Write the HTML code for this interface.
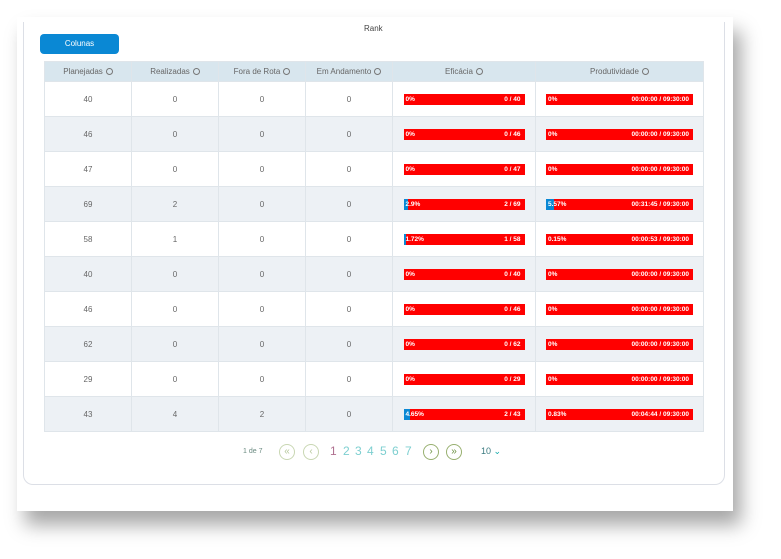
<!DOCTYPE html>
<html><head><meta charset="utf-8"><style>
body{margin:0;width:781px;height:559px;background:#fff;position:relative;overflow:hidden;font-family:"Liberation Sans",sans-serif}
.outer{position:absolute;left:17px;top:17px;width:716px;height:494px;background:#fff;box-shadow:8px 14px 18px rgba(0,0,0,.35)}
.card{position:absolute;left:23px;top:22px;width:700px;height:462px;border:1px solid #dcdfe6;border-top:none;border-radius:0 0 10px 10px;background:#fff}
.rank{position:absolute;left:364px;top:24px;font-size:8px;color:#444}
.btn{position:absolute;left:40px;top:34px;width:79px;height:20px;background:#0a88d4;border-radius:4px;color:#fff;font-size:8px;text-align:center;line-height:20px}
table{position:absolute;left:44px;top:61px;border-collapse:collapse;font-size:8px;color:#666}
td,th{border:1px solid #dfe5ea;text-align:center;padding:0}
th{background:#d8e6ee;height:19px;font-weight:normal;color:#666}
td{height:34px}
tr.z td{background:#edf1f5}
.i{display:inline-block;width:5px;height:5px;border:1px solid #777;border-radius:50%;margin-left:3px;vertical-align:-1px}
.bar{position:relative;height:11px;background:#f00;margin:0 auto;color:#fff;font-size:6.5px;font-weight:bold;line-height:11px;text-align:left;overflow:hidden}
.bar b{position:absolute;left:0;top:0;bottom:0;background:#0a88d4}
.bar .l{position:absolute;left:2px}.bar .r{position:absolute;right:4px}
.pg{position:absolute;top:444px;font-size:12px}
.c{position:absolute;top:444px;width:14px;height:14px;border:1px solid #c9d7b3;border-radius:50%;font-size:10px;line-height:14px;text-align:center;color:#b5c79a}
</style></head><body>
<div class="outer"></div><div class="card"></div>
<div class="rank">Rank</div>
<div class="btn">Colunas</div>
<table>
<tr><th style="width:86px">Planejadas<span class="i"></span></th><th style="width:86px">Realizadas<span class="i"></span></th><th style="width:86px">Fora de Rota<span class="i"></span></th><th style="width:86px">Em Andamento<span class="i"></span></th><th style="width:142px">Eficácia<span class="i"></span></th><th style="width:167px">Produtividade<span class="i"></span></th></tr>
<tr><td>40</td><td>0</td><td>0</td><td>0</td><td><div class="bar" style="width:121px"><span class="l">0%</span><span class="r">0 / 40</span></div></td><td><div class="bar" style="width:147px"><span class="l">0%</span><span class="r">00:00:00 / 09:30:00</span></div></td></tr>
<tr class="z"><td>46</td><td>0</td><td>0</td><td>0</td><td><div class="bar" style="width:121px"><span class="l">0%</span><span class="r">0 / 46</span></div></td><td><div class="bar" style="width:147px"><span class="l">0%</span><span class="r">00:00:00 / 09:30:00</span></div></td></tr>
<tr><td>47</td><td>0</td><td>0</td><td>0</td><td><div class="bar" style="width:121px"><span class="l">0%</span><span class="r">0 / 47</span></div></td><td><div class="bar" style="width:147px"><span class="l">0%</span><span class="r">00:00:00 / 09:30:00</span></div></td></tr>
<tr class="z"><td>69</td><td>2</td><td>0</td><td>0</td><td><div class="bar" style="width:121px"><b style="width:4px"></b><span class="l">2.9%</span><span class="r">2 / 69</span></div></td><td><div class="bar" style="width:147px"><b style="width:8px"></b><span class="l">5.57%</span><span class="r">00:31:45 / 09:30:00</span></div></td></tr>
<tr><td>58</td><td>1</td><td>0</td><td>0</td><td><div class="bar" style="width:121px"><b style="width:2px"></b><span class="l">1.72%</span><span class="r">1 / 58</span></div></td><td><div class="bar" style="width:147px"><span class="l">0.15%</span><span class="r">00:00:53 / 09:30:00</span></div></td></tr>
<tr class="z"><td>40</td><td>0</td><td>0</td><td>0</td><td><div class="bar" style="width:121px"><span class="l">0%</span><span class="r">0 / 40</span></div></td><td><div class="bar" style="width:147px"><span class="l">0%</span><span class="r">00:00:00 / 09:30:00</span></div></td></tr>
<tr><td>46</td><td>0</td><td>0</td><td>0</td><td><div class="bar" style="width:121px"><span class="l">0%</span><span class="r">0 / 46</span></div></td><td><div class="bar" style="width:147px"><span class="l">0%</span><span class="r">00:00:00 / 09:30:00</span></div></td></tr>
<tr class="z"><td>62</td><td>0</td><td>0</td><td>0</td><td><div class="bar" style="width:121px"><span class="l">0%</span><span class="r">0 / 62</span></div></td><td><div class="bar" style="width:147px"><span class="l">0%</span><span class="r">00:00:00 / 09:30:00</span></div></td></tr>
<tr><td>29</td><td>0</td><td>0</td><td>0</td><td><div class="bar" style="width:121px"><span class="l">0%</span><span class="r">0 / 29</span></div></td><td><div class="bar" style="width:147px"><span class="l">0%</span><span class="r">00:00:00 / 09:30:00</span></div></td></tr>
<tr class="z"><td>43</td><td>4</td><td>2</td><td>0</td><td><div class="bar" style="width:121px"><b style="width:6px"></b><span class="l">4.65%</span><span class="r">2 / 43</span></div></td><td><div class="bar" style="width:147px"><span class="l">0.83%</span><span class="r">00:04:44 / 09:30:00</span></div></td></tr>
</table>
<div style="position:absolute;left:243px;top:448px;font-size:7px;color:#6a8a80">1 de 7</div>
<div class="c" style="left:279px">«</div>
<div class="c" style="left:303px">‹</div>
<div class="pg" style="left:330px;color:#b07090">1</div>
<div class="pg" style="left:343px;color:#7dcfd0">2</div>
<div class="pg" style="left:355px;color:#7dcfd0">3</div>
<div class="pg" style="left:367px;color:#7dcfd0">4</div>
<div class="pg" style="left:380px;color:#7dcfd0">5</div>
<div class="pg" style="left:392px;color:#7dcfd0">6</div>
<div class="pg" style="left:405px;color:#7dcfd0">7</div>
<div class="c" style="left:423px;border-color:#98b070;color:#6a9040">›</div>
<div class="c" style="left:446px;border-color:#98b070;color:#6a9040">»</div>
<div style="position:absolute;left:481px;top:446px;font-size:9px;color:#3a7a80">10 <span style="color:#1aa">⌄</span></div>
</body></html>
